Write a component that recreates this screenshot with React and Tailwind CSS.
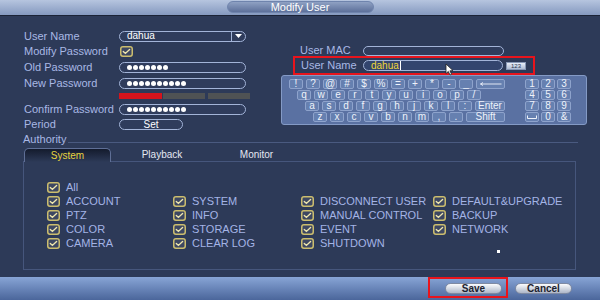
import React from "react";

const Check = ({ w = 13, h = 11 }) => (
  <svg width={w} height={h} viewBox="0 0 13 11" className="flex-none">
    <rect x="0.75" y="0.75" width="11.5" height="9.5" rx="2.2" fill="#3d4762" stroke="#cbbd6e" strokeWidth="1.5" />
    <path d="M3.3 5.4 L5.4 7.4 L9.6 3.4" stroke="#efe7ae" strokeWidth="1.4" fill="none" strokeLinecap="round" />
  </svg>
);

const Input = ({ children, className = "" }) => (
  <div className={"h-[11px] rounded-full border border-[#a3b4d8] bg-[#2f3c5c] flex items-center px-[7px] text-white text-[10px] " + className}>
    {children}
  </div>
);

const Dots = ({ n }) => (
  <div className="flex gap-[1px]">
    {Array.from({ length: n }).map((_, i) => (
      <div key={i} className="w-[5px] h-[5px] rounded-full bg-white" />
    ))}
  </div>
);

const Key = ({ children, w = "w-[14px]" }) => (
  <div className={"h-[10px] rounded-[2px] border border-[#8ea3cc] bg-[#6680b0] flex items-center justify-center text-[#eef2fa] text-[10px] flex-none " + w}>
    {children}
  </div>
);

const Row = ({ label, children, h = "h-[16px]" }) => (
  <div className={"flex items-center " + h}>
    <div className="w-[95px] text-[#a9b8e5]">{label}</div>
    {children}
  </div>
);

const Btn = ({ children }) => (
  <div className="w-[57px] h-[11px] rounded-full border border-[#7f8aa2] bg-gradient-to-b from-[#fbfcfe] to-[#aeb7c8] flex items-center justify-center text-[#1d2330] text-[10px] font-bold">
    {children}
  </div>
);

const items = [
  "All", null, null, null,
  "ACCOUNT", "SYSTEM", "DISCONNECT USER", "DEFAULT&UPGRADE",
  "PTZ", "INFO", "MANUAL CONTROL", "BACKUP",
  "COLOR", "STORAGE", "EVENT", "NETWORK",
  "CAMERA", "CLEAR LOG", "SHUTDOWN", null,
];

export default function App() {
  const row1 = ["!", "?", "@", "#", "$", "%", "=", "+", "*", "-", "_"];
  const row2 = ["q", "w", "e", "r", "t", "y", "u", "i", "o", "p", "/"];
  const row3 = ["a", "s", "d", "f", "g", "h", "j", "k", "l", ":"];
  const row4 = ["z", "x", "c", "v", "b", "n", "m", ",", "."];
  const pad = ["1", "2", "3", "4", "5", "6", "7", "8", "9", "␣", "0", "&"];

  return (
    <div className="w-[600px] h-[300px] bg-[#2d3a58] flex flex-col overflow-hidden font-['Liberation_Sans',Arial,sans-serif] text-[11px] leading-none">
      {/* Title bar */}
      <div className="h-[16px] flex-none bg-gradient-to-b from-[#b6c5df] to-[#8599bf] border-b border-[#1b2337] flex justify-center pt-[1px]">
        <div className="w-[147px] h-[12px] rounded-full border border-[#6f84ad] bg-gradient-to-b from-[#8fa1c3] to-[#5d709a] flex items-center justify-center text-white text-[11px]">
          Modify User
        </div>
      </div>

      {/* Top section */}
      <div className="h-[118px] flex-none flex">
        <div className="w-[281px] flex-none pl-[24px] pt-[12px] flex flex-col">
          <Row label="User Name">
            <Input className="w-[127px] pr-0 justify-between">
              <span>dahua</span>
              <div className="h-full flex items-center border-l border-[#a3b4d8] px-[3px]">
                <svg width="7" height="4" viewBox="0 0 7 4"><path d="M0 0 L7 0 L3.5 4 Z" fill="#fff" /></svg>
              </div>
            </Input>
          </Row>
          <Row label="Modify Password" h="h-[15px]">
            <div className="ml-[1px]"><Check /></div>
          </Row>
          <Row label="Old Password">
            <Input className="w-[127px]"><Dots n={7} /></Input>
          </Row>
          <Row label="New Password">
            <Input className="w-[127px]"><Dots n={10} /></Input>
          </Row>
          <div className="h-[10px] flex items-center pl-[95px] gap-[1px]">
            <div className="w-[43px] h-[6px] bg-[#d4141c]" />
            <div className="w-[42px] h-[6px] bg-[#4f5254]" />
            <div className="w-[1px]" />
            <div className="w-[42px] h-[6px] bg-[#4f5254]" />
          </div>
          <Row label="Confirm Password">
            <Input className="w-[127px]"><Dots n={10} /></Input>
          </Row>
          <Row label="Period" h="h-[15px]">
            <div className="w-[64px] h-[11px] rounded-full border border-[#a3b4d8] bg-[#2f3c5c] flex items-center justify-center text-white text-[10px]">Set</div>
          </Row>
        </div>

        <div className="flex-1 pt-[29px] flex flex-col">
          <div className="h-[11px] flex items-center pl-[19px]">
            <div className="w-[63px] text-[#a9b8e5]">User MAC</div>
            <div className="w-[141px] h-[10px] rounded-full border border-[#a3b4d8] bg-[#2f3c5c]" />
          </div>
          <div className="relative ml-[12px] w-[242px] h-[19px] border-2 border-[#e8141c] flex items-center pl-[6px]">
            <div className="w-[62px] text-[#a9b8e5]">User Name</div>
            <div className="w-[140px] h-[11px] rounded-full border border-[#a3b4d8] bg-[#33456e] flex items-center px-[7px] text-[#eed63a] text-[10px]">
              dahua<span className="w-px h-[9px] bg-white ml-[1px]" />
            </div>
            <div className="ml-[3px] w-[20px] h-[8px] bg-gradient-to-b from-[#e9eef8] to-[#aebbd3] border border-[#8797b5] text-[#2a3550] text-[6px] flex items-center justify-center">123</div>
            <svg className="absolute left-[150px] top-[5px]" width="9" height="13" viewBox="0 0 9 13">
              <path d="M1 1 L1 10.5 L3.3 8.4 L5 12 L6.6 11.3 L4.9 7.8 L8 7.6 Z" fill="#fff" stroke="#222" strokeWidth="0.8" />
            </svg>
          </div>
          <div className="w-[306px] h-[50px] rounded-[3px] border border-[#849ac5] bg-[#5a71a2] flex pt-[3px]">
            <div className="w-[223px] flex flex-col gap-[1px]">
              <div className="flex gap-[3px] ml-[7px]">
                {row1.map((k) => <Key key={k}>{k}</Key>)}
                <Key w="w-[29px]">
                  <svg width="22" height="4" viewBox="0 0 22 4"><path d="M0.5 2 L21.5 2 M0.5 2 L3 0.5 M0.5 2 L3 3.5" stroke="#eef2fa" strokeWidth="0.9" fill="none" /></svg>
                </Key>
              </div>
              <div className="flex gap-[3px] ml-[15px]">
                {row2.map((k) => <Key key={k}>{k}</Key>)}
              </div>
              <div className="flex gap-[3px] ml-[23px]">
                {row3.map((k) => <Key key={k}>{k}</Key>)}
                <Key w="w-[30px]">Enter</Key>
              </div>
              <div className="flex gap-[3px] ml-[31px]">
                {row4.map((k) => <Key key={k}>{k}</Key>)}
                <Key w="w-[39px]">Shift</Key>
              </div>
            </div>
            <div className="ml-[20px] grid grid-cols-[14px_14px_14px] gap-x-[2px] gap-y-[1px] content-start">
              {pad.map((k) =>
                k === "␣" ? (
                  <Key key={k}>
                    <svg width="10" height="4" viewBox="0 0 10 4"><path d="M0.5 0.5 L0.5 3.5 L9.5 3.5 L9.5 0.5" stroke="#eef2fa" strokeWidth="1" fill="none" /></svg>
                  </Key>
                ) : (
                  <Key key={k}>{k}</Key>
                )
              )}
            </div>
          </div>
        </div>
      </div>

      {/* Authority */}
      <div className="h-[10px] flex-none flex items-center pl-[23px]">
        <span className="text-[#a9b8e5]">Authority</span>
        <div className="ml-[2px] mt-[6px] w-[510px] h-px bg-[#4a5a80]" />
      </div>

      {/* Tabs */}
      <div className="mt-[4px] h-[13px] flex-none flex pl-[24px] relative z-10">
        <div className="w-[87px] h-[14px] rounded-t-[5px] border border-b-0 border-[#5f6f96] bg-gradient-to-b from-[#141b2d] to-[#2d3a58] flex items-center justify-center text-[#e6d33f] text-[10px]">
          System
        </div>
        <div className="w-[102px] flex items-center justify-center text-[#e4e8f2] text-[10px]">Playback</div>
        <div className="w-[87px] flex items-center justify-center text-[#e4e8f2] text-[10px]">Monitor</div>
      </div>

      {/* Panel */}
      <div className="relative ml-[23px] w-[553px] h-[109px] flex-none border border-[#46567c] pt-[18px] pl-[23px]">
        <div className="grid grid-cols-[126px_128px_132px_auto] auto-rows-[14px]">
          {items.map((t, i) =>
            t ? (
              <div key={i} className="flex items-center gap-[6px] text-[#a4b4e6]">
                <Check />
                <span>{t}</span>
              </div>
            ) : (
              <div key={i} />
            )
          )}
        </div>
        <div className="absolute left-[473px] top-[88px] w-[3px] h-[3px] bg-white" />
      </div>

      <div className="flex-1" />

      {/* Bottom bar */}
      <div className="h-[23px] flex-none bg-gradient-to-b from-[#88a5d6] to-[#4b669b] flex justify-end items-start pr-[28px]">
        <div className="w-[80px] h-[21px] border-2 border-[#e8141c] pt-[4px] pl-[15px]">
          <Btn>Save</Btn>
        </div>
        <div className="ml-[7px] mt-[6px]">
          <Btn>Cancel</Btn>
        </div>
      </div>
    </div>
  );
}
